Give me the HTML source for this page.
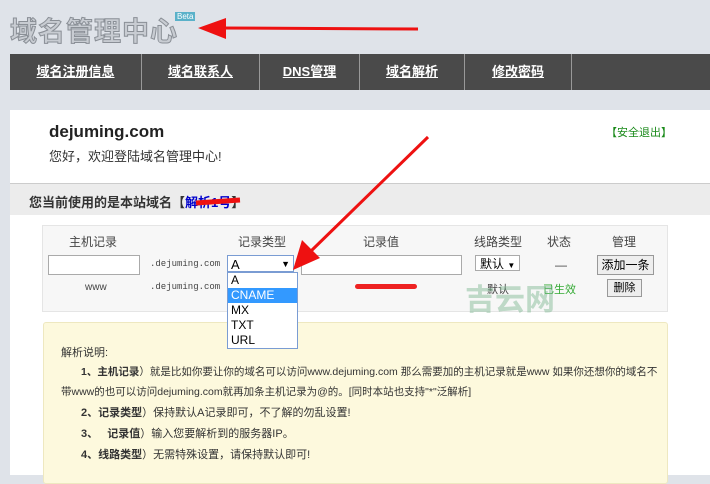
<!DOCTYPE html>
<html><head><meta charset="utf-8"><style>
body{margin:0;width:710px;height:475px;overflow:hidden;background:#dfe3e9;font-family:"Liberation Sans","Noto Sans CJK SC",sans-serif;position:relative}
.a{position:absolute}
.nav{left:10px;top:54px;width:700px;height:36px;background:#4a4a4a}
.nav div{position:absolute;top:0;height:36px;line-height:36px;text-align:center;color:#fff;font-size:13px;font-weight:bold;text-decoration:underline;border-right:1px solid #999}
.t{font-size:11px;color:#444;text-align:center}
.l{position:absolute;font-size:11px;color:#333;white-space:nowrap;line-height:14px}
</style></head><body>
<div class="a" style="left:10px;top:10px;font-size:27px;font-weight:bold;color:#c8ccd2;-webkit-text-stroke:1px #8a8f96;letter-spacing:1px">域名管理中心</div>
<div class="a" style="left:175px;top:12px;background:#5ab1c9;color:#fff;font-size:8px;padding:0 2px">Beta</div>
<svg class="a" style="left:0;top:0" width="710" height="475">
<line x1="418" y1="29" x2="220" y2="28" stroke="#e11" stroke-width="3"/>
<polygon points="198,28 226,18 226,39" fill="#e11"/>
</svg>
<div class="a nav">
<div style="left:0;width:131px">域名注册信息</div>
<div style="left:132px;width:117px">域名联系人</div>
<div style="left:250px;width:99px">DNS管理</div>
<div style="left:350px;width:104px">域名解析</div>
<div style="left:455px;width:106px">修改密码</div>
</div>
<div class="a" style="left:10px;top:110px;width:700px;height:73px;background:#fff"></div>
<div class="a" style="left:49px;top:122px;font-size:17px;font-weight:bold;color:#222">dejuming.com</div>
<div class="a" style="left:49px;top:146px;font-size:13px;color:#333">您好，欢迎登陆域名管理中心!</div>
<div class="a" style="left:606px;top:124px;font-size:11px;color:#1a8a1a">【安全退出】</div>
<div class="a" style="left:10px;top:183px;width:700px;height:32px;background:#ececec;border-top:1px solid #ccc"></div>
<div class="a" style="left:29px;top:192px;font-size:13px;font-weight:bold;color:#333">您当前使用的是本站域名【<span style="color:#00c">解析1号</span>】</div>
<div class="a" style="left:10px;top:215px;width:700px;height:260px;background:#fff"></div>
<div class="a" style="left:42px;top:225px;width:624px;height:85px;background:#f7f7f7;border:1px solid #e5e5e5"></div>
<div class="a t" style="left:48px;top:233px;width:90px;font-size:12px">主机记录</div>
<div class="a t" style="left:228px;top:233px;width:68px;font-size:12px">记录类型</div>
<div class="a t" style="left:300px;top:233px;width:162px;font-size:12px">记录值</div>
<div class="a t" style="left:470px;top:233px;width:56px;font-size:12px">线路类型</div>
<div class="a t" style="left:535px;top:233px;width:48px;font-size:12px">状态</div>
<div class="a t" style="left:596px;top:233px;width:56px;font-size:12px">管理</div>
<div class="a" style="left:48px;top:255px;width:90px;height:18px;background:#fff;border:1px solid #aaa"></div>
<div class="a t" style="left:150px;top:259px;font-family:'Liberation Mono',monospace;font-size:9px">.dejuming.com</div>
<div class="a t" style="left:150px;top:282px;font-family:'Liberation Mono',monospace;font-size:9px">.dejuming.com</div>
<div class="a t" style="left:85px;top:282px;font-size:10px">www</div>
<div class="a" style="left:227px;top:255px;width:67px;height:17px;background:#fff;border:1px solid #7a9cd3;font-size:13px;line-height:17px;padding-left:3px;box-sizing:border-box">A<span style="float:right;font-size:9px;padding-right:3px">▼</span></div>
<div class="a" style="left:301px;top:255px;width:159px;height:18px;background:#fff;border:1px solid #aaa"></div>
<div class="a" style="left:475px;top:255px;width:45px;height:16px;background:#fff;border:1px solid #aaa;font-size:12px;line-height:16px;padding-left:4px;box-sizing:border-box">默认 <span style="font-size:8px">▼</span></div>
<div class="a t" style="left:555px;top:258px;font-size:12px">—</div>
<div class="a" style="left:597px;top:255px;width:55px;height:18px;background:#eee;border:1px solid #999;font-size:12px;text-align:center;line-height:18px">添加一条</div>
<div class="a" style="left:607px;top:279px;width:33px;height:16px;background:#eee;border:1px solid #999;font-size:11px;text-align:center;line-height:16px">删除</div>
<div class="a t" style="left:487px;top:281px;font-size:11px">默认</div>
<div class="a" style="left:543px;top:281px;font-size:11px;color:#3a3">已生效</div>
<div class="a" style="left:465px;top:275px;font-size:30px;font-weight:bold;color:rgba(120,180,140,.45)">吉云网</div>
<div class="a" style="left:355px;top:284px;width:62px;height:5px;background:#e22;border-radius:3px"></div>
<div class="a" style="left:43px;top:322px;width:623px;height:160px;background:#fdf9dd;border:1px solid #eee8c0;border-radius:3px"></div>
<div class="a" style="left:227px;top:272px;width:69px;height:75px;background:#fff;border:1px solid #7a9cd3;font-size:12px;line-height:15px">
<div style="padding-left:3px">A</div><div style="padding-left:3px;background:#3399ff;color:#fff">CNAME</div><div style="padding-left:3px">MX</div><div style="padding-left:3px">TXT</div><div style="padding-left:3px">URL</div></div>
<div class="l" style="left:61px;top:346px">解析说明:</div>
<div class="l" style="left:81px;top:365px;font-size:10.5px"><b>1、主机记录</b>）就是比如你要让你的域名可以访问www.dejuming.com 那么需要加的主机记录就是www 如果你还想你的域名不</div>
<div class="l" style="left:61px;top:385px;font-size:10.5px">带www的也可以访问dejuming.com就再加条主机记录为@的。[同时本站也支持"*"泛解析]</div>
<div class="l" style="left:81px;top:406px"><b>2、记录类型</b>）保持默认A记录即可，不了解的勿乱设置!</div>
<div class="l" style="left:81px;top:427px"><b>3、&nbsp;&nbsp;&nbsp;记录值</b>）输入您要解析到的服务器IP。</div>
<div class="l" style="left:81px;top:448px"><b>4、线路类型</b>）无需特殊设置，请保持默认即可!</div>
<svg class="a" style="left:0;top:0" width="710" height="475">
<line x1="428" y1="137" x2="310" y2="252" stroke="#e11" stroke-width="3"/>
<polygon points="293,270 302,240 320,258" fill="#e11"/>
<path d="M196 203 L240 200" stroke="#e11" stroke-width="5"/>
</svg>
</body></html>
